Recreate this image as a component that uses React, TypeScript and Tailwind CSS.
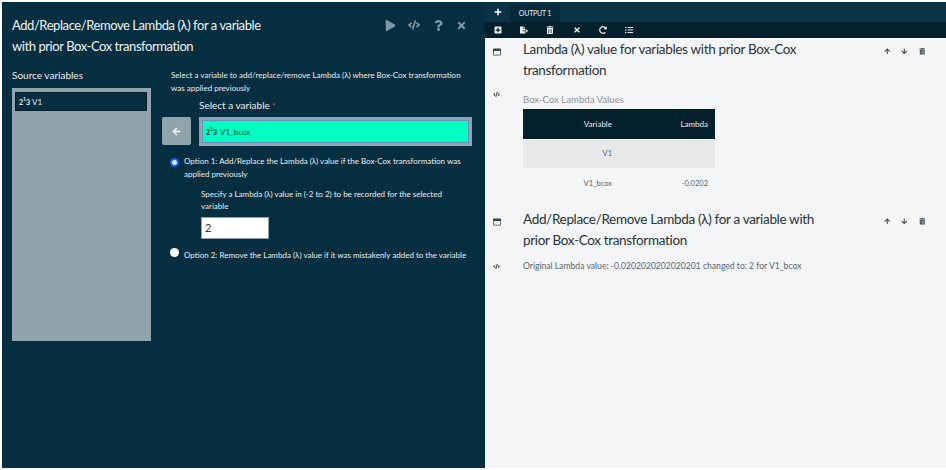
import { FaPlay, FaCode, FaQuestion, FaTimes, FaPlus, FaPlusSquare, FaFileExport, FaTrashAlt, FaRedoAlt, FaListUl, FaRegWindowMaximize, FaArrowUp, FaArrowDown, FaArrowLeft } from "react-icons/fa";

function NumIcon({ className = "" }: { className?: string }) {
  return (
    <span className={"inline-flex items-end leading-none font-bold " + className}>
      <span className="text-[7px]">2</span>
      <span className="text-[5px] mb-[4px]">1</span>
      <span className="text-[7px]">3</span>
    </span>
  );
}

function Section({ title, children }: { title: string[]; children: React.ReactNode }) {
  return (
    <section className="flex">
      <div className="w-[38px] shrink-0 pl-[8px] text-[#39464e]">
        <FaRegWindowMaximize className="text-[8px] mt-[9px]" />
      </div>
      <div className="flex-1">
        <div className="flex">
          <h2 className="text-[13.5px] leading-[20.5px] text-[#28333a] w-[340px] tracking-[-0.33px]">
            {title.map((t) => <div key={t} className="whitespace-nowrap">{t}</div>)}
          </h2>
          <div className="ml-auto mr-[21px] mt-[9px] flex gap-[11px] text-[6.5px] text-[#39464e]">
            <FaArrowUp /><FaArrowDown /><FaTrashAlt />
          </div>
        </div>
        {children}
      </div>
    </section>
  );
}

export default function App() {
  return (
    <div className="w-[946px] h-[470px] bg-white pt-[2px] pl-[2px] pb-[2px] flex text-[8px] overflow-hidden" style={{ fontFamily: 'Lato, "Liberation Sans", sans-serif' }}>
      <div className="w-[483px] h-[466px] bg-[#052f40] text-[#e8eef0] shrink-0 pl-[10px]">
        <div className="flex">
          <h1 className="text-[13px] leading-[21px] pt-[13px] w-[340px] tracking-[-0.43px] text-[#eef3f4]">
            <div>Add/Replace/Remove Lambda (λ) for a variable</div>
            <div>with prior Box-Cox transformation</div>
          </h1>
          <div className="flex items-center gap-[12px] h-[16px] mt-[15px] ml-[33px] text-[#7f9aa5]">
            <FaPlay className="text-[11px]" />
            <FaCode className="text-[12px]" />
            <FaQuestion className="text-[11px] ml-[1px]" />
            <FaTimes className="text-[11px]" />
          </div>
        </div>
        <div className="flex mt-[12px]">
          <div className="w-[139px] shrink-0">
            <div className="text-[10px] leading-[14px] mt-[-1px]">Source variables</div>
            <div className="h-[253px] mt-[6px] bg-[#90a4ae] p-[4px] pl-[3px]">
              <div className="h-[19px] bg-[#052f40] flex items-center pl-[3px] gap-[2px] text-[8px] border border-[#04202c]">
                <NumIcon /> V1
              </div>
            </div>
          </div>
          <div className="flex-1 pl-[11px]">
            <div className="pl-[9px] text-[8px] leading-[13px] w-[310px]">
              Select a variable to add/replace/remove Lambda (λ) where Box-Cox transformation was applied previously
            </div>
            <div className="pl-[37px] text-[10px] leading-[14px] mt-[3px]">
              Select a variable <span className="text-[#e05a3a] text-[8px]">*</span>
            </div>
            <div className="flex mt-[4px] gap-[8px]">
              <button className="w-[29px] h-[28px] bg-[#90a4ae] rounded-[2px] flex items-center justify-center text-white text-[9px]">
                <FaArrowLeft />
              </button>
              <div className="w-[273px] h-[29px] bg-[#90a4ae] p-[3px]">
                <div className="h-full bg-[#00ffc3] border border-[#6a8fc0] flex items-center gap-[3px] pl-[3px] text-[8px] text-[#1c4a4a]">
                  <NumIcon className="text-[#123]" /> V1_bcox
                </div>
              </div>
            </div>
            <div className="flex mt-[9px] pl-[8px]">
              <span className="w-[9px] h-[9px] rounded-full bg-[#dbe8fc] border-[2px] border-[#1565e8] mt-[3px] shrink-0" />
              <div className="ml-[5px] text-[8px] leading-[13px] w-[290px]">
                Option 1: Add/Replace the Lambda (λ) value if the Box-Cox transformation was applied previously
              </div>
            </div>
            <div className="pl-[39px] mt-[8px] text-[8px] leading-[11.5px] w-[285px]">
              Specify a Lambda (λ) value in (-2 to 2) to be recorded for the selected variable
            </div>
            <div className="ml-[39px] mt-[5px] w-[68px] h-[22px] bg-white border border-[#90a4ae] flex items-center pl-[3px] text-[11px] text-[#333]">2</div>
            <div className="flex mt-[9px] pl-[8px]">
              <span className="w-[9px] h-[9px] rounded-full bg-white shrink-0" />
              <div className="ml-[5px] text-[8px] leading-[13px] whitespace-nowrap mt-[1px]">
                Option 2: Remove the Lambda (λ) value if it was mistakenly added to the variable
              </div>
            </div>
          </div>
        </div>
      </div>
      <div className="flex-1 flex flex-col bg-[#f4f5f7] min-w-0">
        <div className="h-[20px] bg-[#0a3446] flex items-end shrink-0">
          <div className="w-[25px] h-full flex items-center justify-center text-white text-[8px]"><FaPlus /></div>
          <div className="w-[50px] h-[18px] bg-[#05293a] rounded-t-[2px] text-[#e8eef0] text-[7px] tracking-[-0.2px] flex items-center justify-center">OUTPUT 1</div>
        </div>
        <div className="h-[16px] bg-[#04202c] flex items-center text-[#e8eef0] text-[8px] shrink-0 pl-[9px] gap-[18px]">
          <FaPlusSquare />
          <FaFileExport />
          <FaTrashAlt />
          <FaTimes className="ml-[1px]" />
          <FaRedoAlt />
          <FaListUl />
        </div>
        <div className="pt-[1px]">
          <Section title={["Lambda (λ) value for variables with prior Box-Cox", "transformation"]}>
            <div className="flex">
              <div className="ml-[-30px] mt-[11px] w-[30px] text-[7px] text-[#39464e]"><FaCode /></div>
              <div>
                <div className="text-[9.6px] leading-[13px] mt-[13px] text-[#8a949b]">Box-Cox Lambda Values</div>
                <table className="mt-[3px] w-[192px] text-[8px] border-collapse">
                  <thead>
                    <tr className="h-[30px] bg-[#04202c] text-[#e8eef0]">
                      <th className="font-normal text-right w-[89px]">Variable</th>
                      <th className="font-normal text-right pr-[7px]">Lambda</th>
                    </tr>
                  </thead>
                  <tbody className="text-[#59646b] text-[7.5px]">
                    <tr className="h-[29px] bg-[#e7e8ea] border-t border-[#f4f5f7]"><td className="text-right">V1</td><td></td></tr>
                    <tr className="h-[31px]"><td className="text-right">V1_bcox</td><td className="text-right pr-[7px]">-0.0202</td></tr>
                  </tbody>
                </table>
              </div>
            </div>
          </Section>
          <div className="mt-[10px]">
            <Section title={["Add/Replace/Remove Lambda (λ) for a variable with", "prior Box-Cox transformation"]}>
              <div className="flex mt-[10px]">
                <div className="ml-[-30px] mt-[3px] w-[30px] text-[7px] text-[#39464e]"><FaCode /></div>
                <div className="text-[8.6px] leading-[13px] text-[#5a656c]">Original Lambda value: -0.0202020202020201 changed to: 2 for V1_bcox</div>
              </div>
            </Section>
          </div>
        </div>
      </div>
    </div>
  );
}
